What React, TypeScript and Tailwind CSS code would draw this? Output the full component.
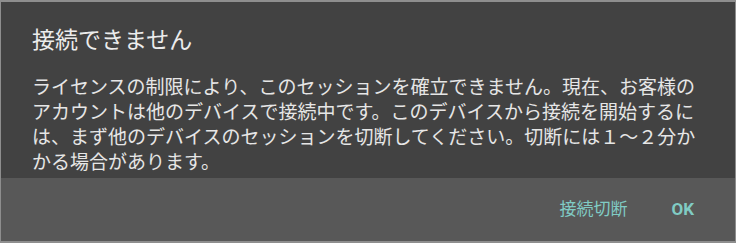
import React from 'react';

const font = { fontFamily: 'Roboto, "Noto Sans CJK JP", sans-serif' };

const body =
  'ライセンスの制限により、このセッションを確立できません。現在、お客様のアカウントは他のデバイスで接続中です。このデバイスから接続を開始するには、まず他のデバイスのセッションを切断してください。切断には１～２分かかる場合があります。';

export default function App() {
  return (
    <div
      className="w-[736px] h-[243px] flex flex-col bg-[#424242] border-t-2 border-b-2 border-x border-[#8e8e8e]"
      style={font}
    >
      <div className="flex flex-col px-[31px] pt-[23px]">
        <h1 className="text-[23px] leading-[32px] text-[#ececec]">接続できません</h1>
        <p className="mt-[18px] w-[672px] text-[19px] leading-[25px] text-[#e6e6e6]">{body}</p>
      </div>
      <div className="mt-auto h-[63px] bg-[#585858] flex items-center justify-end pr-[41px] gap-[44px]">
        <button className="text-[17px] text-[#80cbc4]">接続切断</button>
        <button className="text-[17px] font-bold text-[#80cbc4]">OK</button>
      </div>
    </div>
  );
}
